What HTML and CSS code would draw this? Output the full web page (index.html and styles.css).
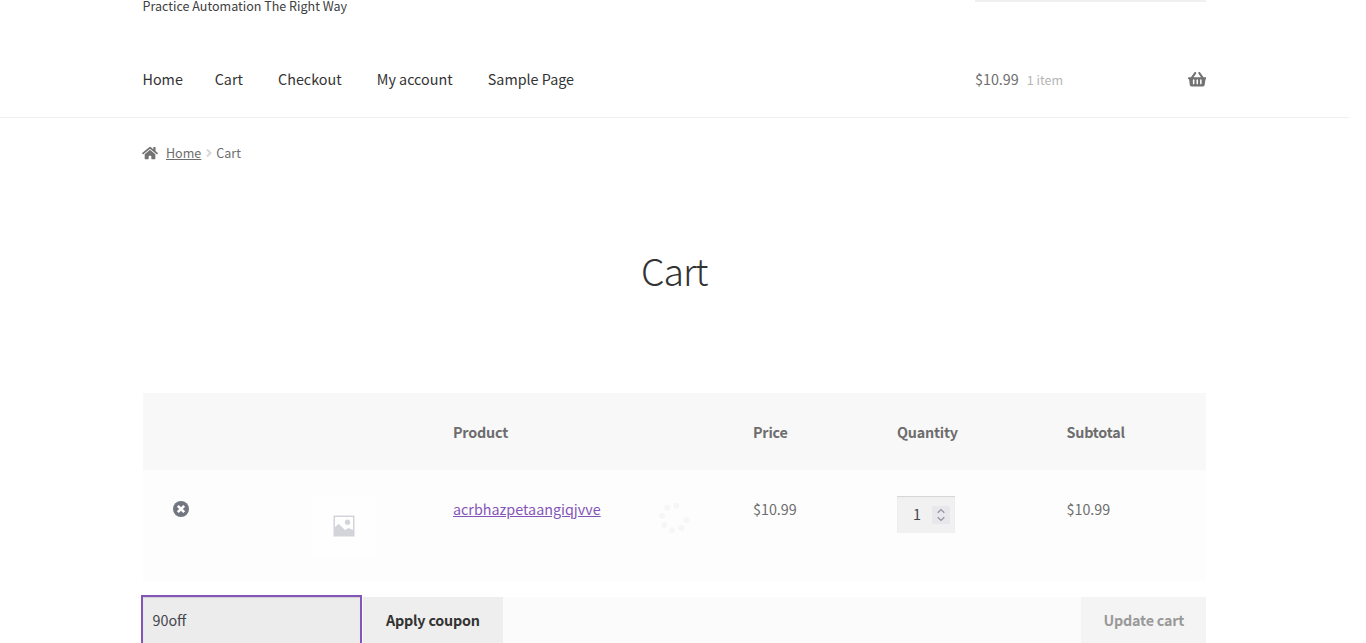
FILE: index.html
```html
<!DOCTYPE html>
<html lang="en">
<head>
<meta charset="utf-8">
<title>Cart</title>
<link rel="stylesheet" href="styles.css">
</head>
<body>
<div class="page">
  <header class="header">
    <div class="wrap branding">
      <p class="tagline">Practice Automation The Right Way</p>
      <div class="search"></div>
    </div>
    <div class="wrap navbar">
      <nav class="nav">
        <a>Home</a><a>Cart</a><a>Checkout</a><a>My account</a><a>Sample Page</a>
      </nav>
      <div class="mini-cart">
        <span class="amount">$10.99</span><span class="count">1 item</span>
        <svg class="basket" viewBox="0 0 576 512"><path fill="#727272" d="M576 216v16c0 13.255-10.745 24-24 24h-8l-26.113 182.788C514.509 462.435 494.257 480 470.37 480H105.63c-23.887 0-44.139-17.565-47.518-41.212L32 256h-8c-13.255 0-24-10.745-24-24v-16c0-13.255 10.745-24 24-24h67.341l106.78-146.821c10.395-14.292 30.407-17.453 44.701-7.058 14.293 10.395 17.453 30.408 7.058 44.701L170.477 192h235.046L326.12 82.821c-10.395-14.292-7.234-34.306 7.059-44.701 14.291-10.395 34.306-7.235 44.701 7.058L484.659 192H552c13.255 0 24 10.745 24 24zM312 392V280c0-13.255-10.745-24-24-24s-24 10.745-24 24v112c0 13.255 10.745 24 24 24s24-10.745 24-24zm112 0V280c0-13.255-10.745-24-24-24s-24 10.745-24 24v112c0 13.255 10.745 24 24 24s24-10.745 24-24zm-224 0V280c0-13.255-10.745-24-24-24s-24 10.745-24 24v112c0 13.255 10.745 24 24 24s24-10.745 24-24z"/></svg>
      </div>
    </div>
  </header>
  <div class="wrap crumbs">
    <svg class="house" viewBox="0 0 576 512"><path fill="#727272" d="M280.37 148.26L96 300.11V464a16 16 0 0 0 16 16l112.06-.29a16 16 0 0 0 15.92-16V368a16 16 0 0 1 16-16h64a16 16 0 0 1 16 16v95.64a16 16 0 0 0 16 16.05L464 480a16 16 0 0 0 16-16V300L295.67 148.26a12.19 12.19 0 0 0-15.3 0zM571.6 251.47L488 182.56V44.05a12 12 0 0 0-12-12h-56a12 12 0 0 0-12 12v72.61L318.47 43a48 48 0 0 0-61 0L4.34 251.47a12 12 0 0 0-1.6 16.9l25.5 31A12 12 0 0 0 45.15 301l235.22-193.74a12.19 12.19 0 0 1 15.3 0L530.9 301a12 12 0 0 0 16.9-1.6l25.5-31a12 12 0 0 0-1.7-16.93z"/></svg>
    <a class="crumb-link">Home</a>
    <svg class="chevron" viewBox="0 0 6 10"><path d="M1 1.5 4.5 5 1 8.5" fill="none" stroke="#d5d5d5" stroke-width="1.8"/></svg>
    <span>Cart</span>
  </div>
  <main class="wrap">
    <h1 class="title">Cart</h1>
    <section class="cart">
      <div class="row head">
        <span></span><span></span><span>Product</span><span>Price</span><span>Quantity</span><span>Subtotal</span>
      </div>
      <div class="row item">
        <svg class="remove" viewBox="0 0 16 16"><circle cx="8" cy="8" r="8" fill="#717681"/><path d="M4.8 4.8l6.4 6.4M11.2 4.8l-6.4 6.4" stroke="#fff" stroke-width="2.6"/></svg>
        <div class="thumb">
          <svg viewBox="0 0 22 22"><path fill="#d2d4da" fill-rule="evenodd" d="M.5.5h21v21H.5zM2 2v10.2L5.5 8.8 12 15l3.5-2 4.5 2V2z"/><circle cx="14.5" cy="7.2" r="2.6" fill="#d2d4da"/></svg>
        </div>
        <a class="product">acrbhazpetaangiqjvve</a>
        <span>$10.99</span>
        <div class="qty"><span>1</span>
          <svg class="spin" viewBox="0 0 18 18"><path fill="#e7e7ec" d="M0 0h18v18H0z"/><path d="M5.7 6.7 9 3.6l3.3 3.1M5.7 11.3 9 14.4l3.3-3.1" fill="none" stroke="#9595a2" stroke-width="1.4"/></svg>
        </div>
        <span>$10.99</span>
        <svg class="loader" viewBox="0 0 50 50"><g fill="#f6f6f6"><circle cx="17.3" cy="17.7" r="3"/><circle cx="26.3" cy="15.7" r="3"/><circle cx="12" cy="25.7" r="3"/><circle cx="36.4" cy="30.2" r="3"/><circle cx="14.2" cy="34.9" r="3"/><circle cx="22" cy="40.2" r="3"/><circle cx="31.3" cy="38" r="3"/></g></svg>
      </div>
      <div class="actions">
        <div class="coupon">90off</div>
        <div class="button apply">Apply coupon</div>
        <div class="button update">Update cart</div>
      </div>
    </section>
  </main>
</div>
</body>
</html>
```
FILE: styles.css
```css
* { box-sizing: border-box; }
body {
  margin: 0;
  height: 643px;
  overflow: hidden;
  background: #fff;
  color: #6d6d6d;
  font-family: "Noto Sans CJK JP", "Noto Sans CJK SC", sans-serif;
  font-size: 14.33px;
  line-height: 26px;
}
svg { display: block; flex: none; }
.page { width: 1349px; height: 643px; overflow: hidden; }
.wrap { width: 1063.5px; margin-left: 142.5px; }
.header { height: 118px; border-bottom: 1px solid #f0f0f0; }
.branding { display: flex; justify-content: space-between; height: 42px; }
.tagline { margin: -3px 0 0; font-size: 12.54px; line-height: 18px; color: #404040; }
.search { width: 231px; height: 2px; background: #f0f0f0; }
.navbar { display: flex; height: 75px; align-items: center; justify-content: space-between; }
.nav { display: flex; gap: 35.2px; padding-bottom: 2px; color: #333; }
.nav a:first-child { margin-right: -3.3px; }
.mini-cart { display: flex; align-items: center; width: 231px; }
.amount { padding-bottom: 2px; }
.count { margin-left: 8px; font-size: 12.54px; color: #b5b5b5; }
.basket { width: 18.5px; height: 16.5px; margin-left: auto; }
.crumbs { display: flex; align-items: center; height: 70px; font-size: 12.54px; }
.house { width: 16px; height: 14.2px; margin: 0 8px 0 -0.5px; }
.crumb-link { text-decoration: underline; }
.chevron { width: 6px; height: 10px; margin: 0 4px 0 5px; }
.title {
  margin: 0;
  padding-top: 54px;
  height: 205px;
  font-size: 37.5px;
  line-height: 56px;
  font-weight: 300;
  letter-spacing: -1.1px;
  text-align: center;
  color: #333;
}
.row {
  position: relative;
  display: grid;
  grid-template-columns: 170px 140.5px 300px 144px 169.5px 139.5px;
}
.head {
  height: 77px;
  align-items: center;
  background: #f8f8f8;
  font-weight: 700;
  letter-spacing: -0.2px;
}
.item { height: 111px; padding-top: 26px; align-items: start; background: #fdfdfd; }
.remove { width: 16px; height: 16px; margin: 5px 0 0 30.5px; }
.thumb { width: 62px; height: 60px; padding: 19px 20px; background: #fefefe; }
.thumb svg { width: 22px; height: 22px; }
.product { color: #8455b8; text-decoration: underline; }
.qty {
  display: flex;
  align-items: center;
  justify-content: space-between;
  width: 58px;
  height: 37px;
  padding: 0 5px 0 16px;
  background: #f1f1f1;
  box-shadow: inset 0 1px 1px rgba(0, 0, 0, .125);
  color: #43454b;
}
.qty span { padding-bottom: 2px; }
.spin { width: 18px; height: 18px; }
.loader { position: absolute; left: 507.5px; top: 20px; width: 50px; height: 50px; }
.actions { display: flex; height: 62px; margin-top: 16px; background: #fbfbfb; }
.coupon {
  width: 217.3px;
  padding: 10px;
  background: #ececec;
  outline: 2px solid #8455b8;
  box-shadow: inset 0 1px 1px rgba(0, 0, 0, .125);
  color: #43454b;
}
.button {
  padding: 10px 22.5px;
  font-weight: 700;
  letter-spacing: -0.2px;
  background: #eee;
  color: #333;
  white-space: nowrap;
}
.apply { width: 140px; margin-left: 3.2px; padding-left: 23px; }
.update { width: 125px; margin-left: auto; background: #f4f4f4; color: #999; }
```
